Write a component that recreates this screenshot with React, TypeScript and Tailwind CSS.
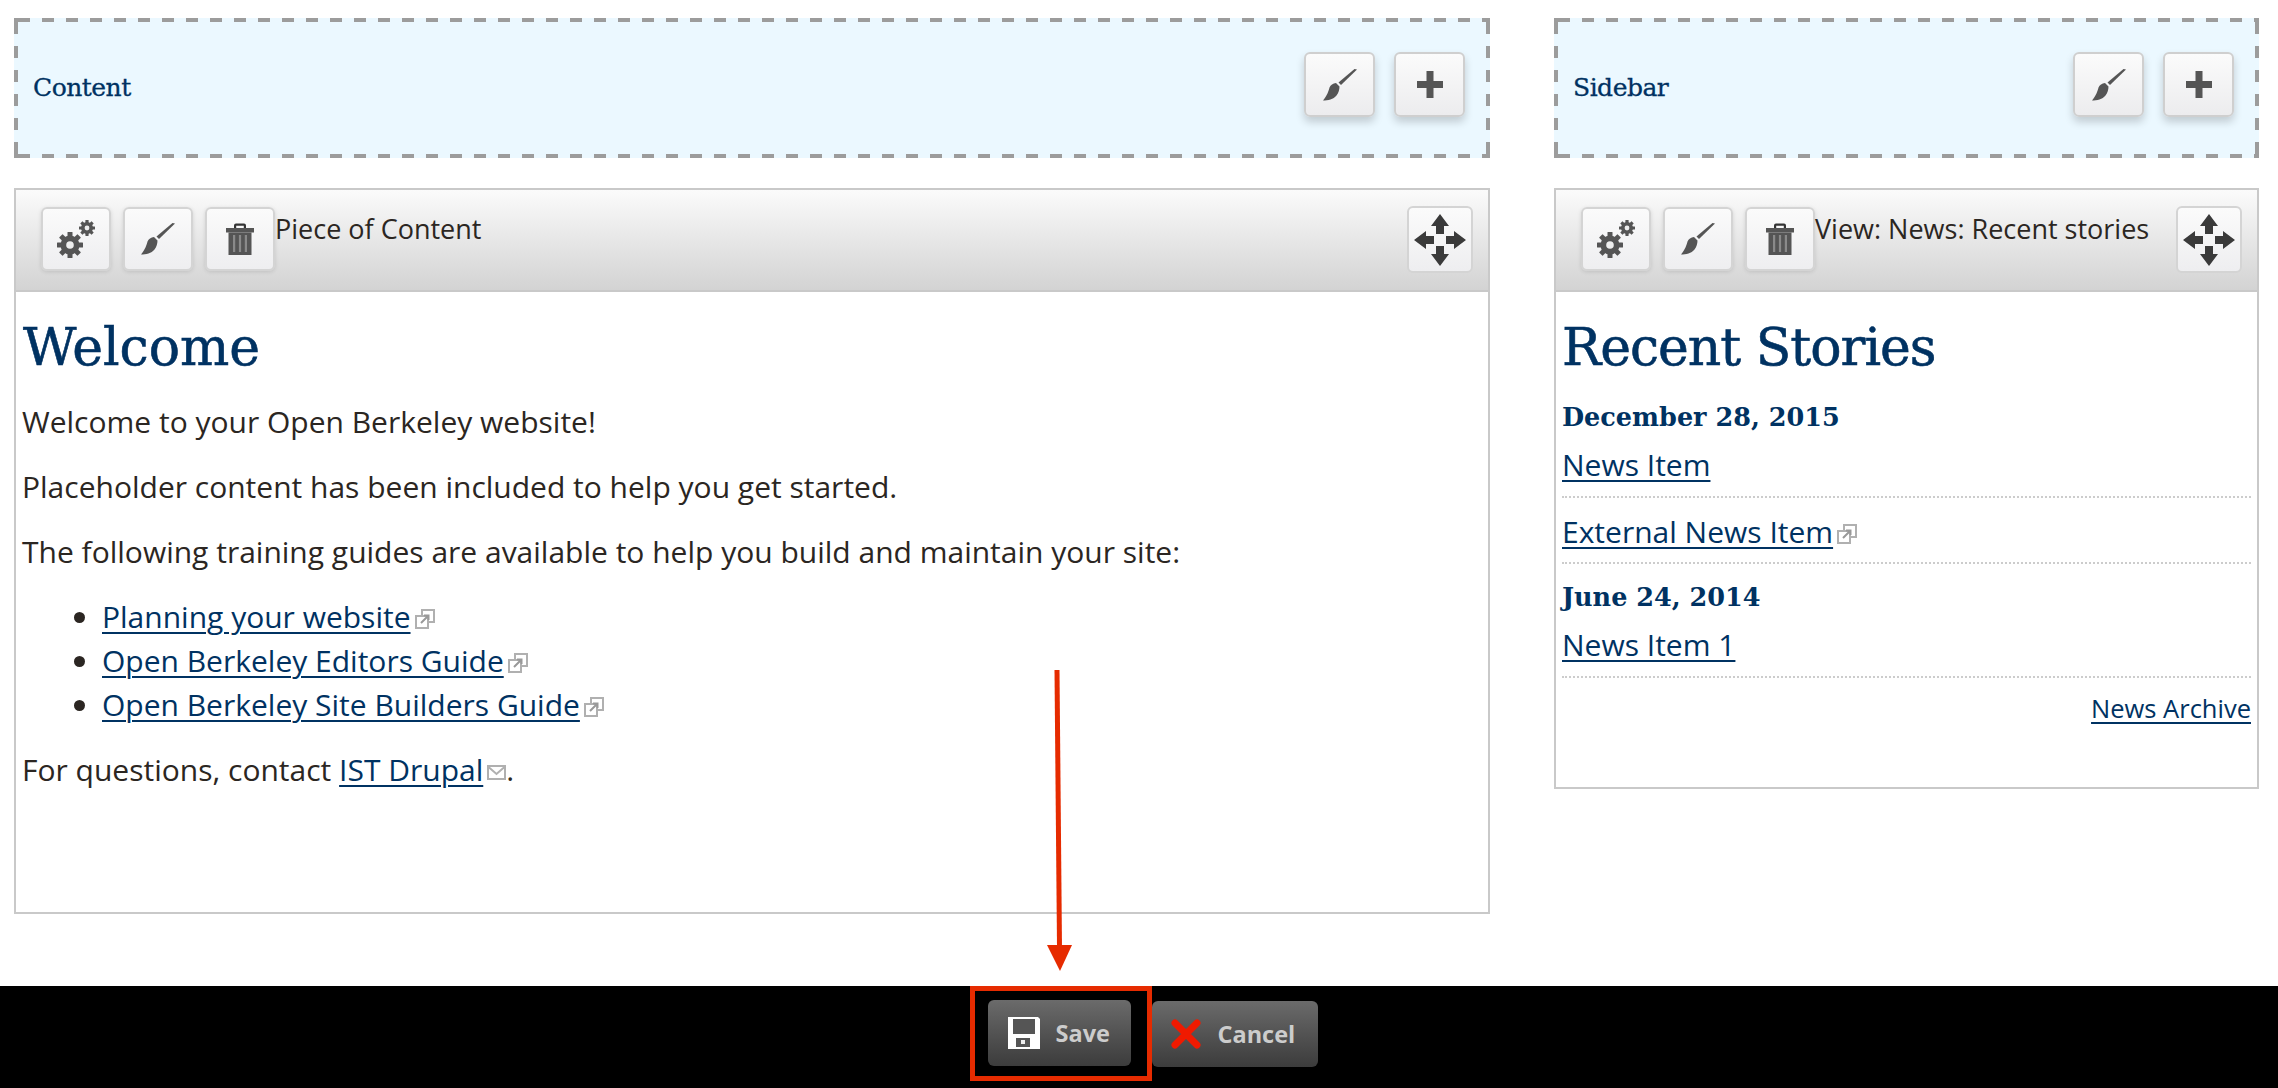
import React from 'react'

const sans = "font-['Open_Sans',sans-serif]"
const slab = "font-['DejaVu_Serif',serif]"
const link = 'text-[#003262] underline decoration-[2px] underline-offset-[4px]'

function GearsIcon() {
    const teeth = [0, 45, 90, 135]
    return (
        <svg width="38" height="38" viewBox="0 0 38 38" fill="#555">
            <g transform="translate(13 25)">
                {teeth.map((a) => (
                    <rect key={a} x="-2.5" y="-13" width="5" height="26" rx="0.5" transform={`rotate(${a})`} />
                ))}
                <circle r="9.5" />
                <circle r="3.8" fill="#eee" />
            </g>
            <g transform="translate(30 8)">
                {teeth.map((a) => (
                    <rect key={a} x="-1.6" y="-8" width="3.2" height="16" rx="0.4" transform={`rotate(${a})`} />
                ))}
                <circle r="6" />
                <circle r="2.4" fill="#eee" />
            </g>
        </svg>
    )
}

function BrushIcon() {
    return (
        <svg width="34" height="32" viewBox="0 0 34 32" fill="#555">
            <path d="M34 0.5 L18 16 L15.5 13.5 L31.5 0 Z" />
            <path d="M16.5 17.5 L13 14 C10 14.5 7.5 16 6.5 18.5 C5.5 22 4 27 0 31.5 C5 31.5 10.5 30.5 13.5 26.5 C15.5 24 16.5 20.5 16.5 17.5 Z" />
        </svg>
    )
}

function TrashIcon() {
    return (
        <svg width="28" height="32" viewBox="0 0 28 32" fill="#555">
            <path d="M8 5 V2.5 Q8 0.5 10 0.5 H18 Q20 0.5 20 2.5 V5 H17.8 V2.8 H10.2 V5 Z" fill="#333" />
            <rect x="0" y="5" width="28" height="4.5" />
            <path d="M2.5 9.5 H25.5 V32 H2.5 Z" />
            <path d="M7 12 H9.2 V29 H7 Z M12.9 12 H15.1 V29 H12.9 Z M18.8 12 H21 V29 H18.8 Z" fill="#8a8a8a" />
        </svg>
    )
}

function PlusIcon() {
    return (
        <svg width="26" height="27" viewBox="0 0 26 27" fill="#555">
            <path d="M9.5 0 H16.5 V10 H26 V17 H16.5 V27 H9.5 V17 H0 V10 H9.5 Z" />
        </svg>
    )
}

function MoveIcon() {
    return (
        <svg width="52" height="52" viewBox="0 0 52 52" fill="#3a3a3a">
            <path d="M26 0 L35 12 H30 V20 H22 V12 H17 Z" />
            <path d="M26 52 L35 40 H30 V32 H22 V40 H17 Z" />
            <path d="M0 26 L12 17 V22 H20 V30 H12 V35 Z" />
            <path d="M52 26 L40 17 V22 H32 V30 H40 V35 Z" />
        </svg>
    )
}

function ExternalIcon() {
    return (
        <svg className="inline-block ml-[4px] align-[-1px]" width="20" height="20" viewBox="0 0 20 20" fill="none" stroke="#b0b0b0" strokeWidth="2">
            <rect x="7" y="1" width="12" height="12" />
            <rect x="1" y="7" width="12" height="12" fill="#fff" />
            <path d="M6 14 L13 7 M9 6.5 H13.5 V11" stroke="#999" />
        </svg>
    )
}

function MailIcon() {
    return (
        <svg className="inline-block ml-[4px] align-[1px]" width="19" height="15" viewBox="0 0 19 15" fill="none" stroke="#b0b0b0" strokeWidth="2">
            <rect x="1" y="1" width="17" height="13" />
            <path d="M1.5 2 L9.5 9 L17.5 2" />
        </svg>
    )
}

function RegionButton({ children }: { children: React.ReactNode }) {
    return (
        <div className="w-[71px] h-[65px] flex items-center justify-center rounded-[6px] border-2 border-[#cfcfcf] bg-gradient-to-b from-[#fbfbfb] to-[#ececee] shadow-[0_5px_8px_rgba(0,0,0,0.18)]">
            {children}
        </div>
    )
}

function BarButton({ children }: { children: React.ReactNode }) {
    return (
        <div className="w-[70px] h-[64px] shrink-0 flex items-center justify-center rounded-[6px] border-2 border-[#d4d4d4] bg-gradient-to-b from-[#fbfbfb] to-[#eeeef0] shadow-[0_1px_4px_rgba(0,0,0,0.12)]">
            {children}
        </div>
    )
}

function Region({ title }: { title: string }) {
    return (
        <div className="h-[140px] pl-[19px] pr-[25px] flex items-center justify-between [background:linear-gradient(#9c9c9c,#9c9c9c)_left_top/4px_4px_no-repeat,linear-gradient(#9c9c9c,#9c9c9c)_right_top/4px_4px_no-repeat,linear-gradient(#9c9c9c,#9c9c9c)_left_bottom/4px_4px_no-repeat,linear-gradient(#9c9c9c,#9c9c9c)_right_bottom/4px_4px_no-repeat,repeating-linear-gradient(90deg,transparent_0_4px,#9c9c9c_4px_16px,transparent_16px_24px)_top/100%_4px_no-repeat,repeating-linear-gradient(90deg,transparent_0_4px,#9c9c9c_4px_16px,transparent_16px_24px)_bottom/100%_4px_no-repeat,repeating-linear-gradient(180deg,transparent_0_4px,#9c9c9c_4px_16px,transparent_16px_24px)_left/4px_100%_no-repeat,repeating-linear-gradient(180deg,transparent_0_4px,#9c9c9c_4px_16px,transparent_16px_24px)_right/4px_100%_no-repeat,#ebf8ff]">
            <span className={`${slab} text-[25px] text-[#003262] tracking-[-0.5px] [-webkit-text-stroke:0.3px_#003262]`}>{title}</span>
            <div className="flex gap-[19px] -mt-[7px]">
                <RegionButton><BrushIcon /></RegionButton>
                <RegionButton><PlusIcon /></RegionButton>
            </div>
        </div>
    )
}

function PanelBar({ title }: { title: string }) {
    return (
        <div className="h-[102px] px-[25px] pt-[17px] flex items-start bg-gradient-to-b from-[#fbfbfb] to-[#d3d3d3] border-b-2 border-[#c9c9c9]">
            <div className="flex gap-[12px]">
                <BarButton><GearsIcon /></BarButton>
                <BarButton><BrushIcon /></BarButton>
                <BarButton><TrashIcon /></BarButton>
            </div>
            <span className="text-[27px] leading-[38px] mt-[3px] text-[#2b2622] whitespace-nowrap">{title}</span>
            <div className="ml-auto -mt-[1px] -mr-[10px] w-[66px] h-[67px] flex items-center justify-center rounded-[6px] border-2 border-[#d4d4d4] bg-gradient-to-b from-[#fbfbfb] to-[#eeeef0]">
                <MoveIcon />
            </div>
        </div>
    )
}

export default function App() {
    return (
        <div className={`${sans} relative w-[2278px] h-[1088px] bg-white flex flex-col overflow-hidden text-[30px] leading-[44px] text-[#2b2622]`}>
            <main className="flex-1 pl-[14px] pt-[18px] flex items-start gap-[64px]">
                {/* Content column */}
                <div className="w-[1476px] flex flex-col gap-[30px]">
                    <Region title="Content" />
                    <section className="h-[726px] border-2 border-[#c9c9c9]">
                        <PanelBar title="Piece of Content" />
                        <div className="px-[6px]">
                            <h1 className={`${slab} text-[52px] leading-[64px] text-[#003262] pt-[23px] pl-[1px] mb-[21px] [-webkit-text-stroke:0.6px_#003262]`}>Welcome</h1>
                            <p className="mb-[21px]">Welcome to your Open Berkeley website!</p>
                            <p className="mb-[21px]">Placeholder content has been included to help you get started.</p>
                            <p className="mb-[21px]">The following training guides are available to help you build and maintain your site:</p>
                            <ul className="list-disc pl-[80px] mb-[21px]">
                                <li><a className={link}>Planning your website</a><ExternalIcon /></li>
                                <li><a className={link}>Open Berkeley Editors Guide</a><ExternalIcon /></li>
                                <li><a className={link}>Open Berkeley Site Builders Guide</a><ExternalIcon /></li>
                            </ul>
                            <p>For questions, contact <a className={link}>IST Drupal</a><MailIcon />.</p>
                        </div>
                    </section>
                </div>

                {/* Sidebar column */}
                <div className="w-[705px] flex flex-col gap-[30px]">
                    <Region title="Sidebar" />
                    <section className="h-[601px] border-2 border-[#c9c9c9]">
                        <PanelBar title="View: News: Recent stories" />
                        <div className="px-[6px]">
                            <h2 className={`${slab} text-[52px] leading-[64px] tracking-[-1px] text-[#003262] pt-[23px] mb-[18px] whitespace-nowrap [-webkit-text-stroke:0.6px_#003262]`}>Recent Stories</h2>
                            <h3 className={`${slab} font-bold text-[25.5px] leading-[40px] text-[#003262] mb-[6px]`}>December 28, 2015</h3>
                            <div className="pb-[9px] border-b-2 border-dotted border-[#cccccc]"><a className={link}>News Item</a></div>
                            <div className="pt-[12px] pb-[8px] border-b-2 border-dotted border-[#cccccc]"><a className={link}>External News Item</a><ExternalIcon /></div>
                            <h3 className={`${slab} font-bold text-[25.5px] leading-[40px] text-[#003262] mt-[13px] mb-[6px]`}>June 24, 2014</h3>
                            <div className="pb-[9px] border-b-2 border-dotted border-[#cccccc]"><a className={link}>News Item 1</a></div>
                            <div className="mt-[11px] text-right text-[25.5px] leading-[38px]"><a className={link}>News Archive</a></div>
                        </div>
                    </section>
                </div>
            </main>

            {/* Save bar */}
            <footer className="h-[102px] bg-black flex items-start justify-center pl-[9px]">
                <div className="w-[182px] h-[95px] border-[5px] border-[#e62b00] flex items-center pl-[13px]">
                    <button className="w-[143px] h-[66px] -mt-[2px] flex items-center gap-[16px] pl-[20px] rounded-[6px] bg-gradient-to-b from-[#6b6b6b] to-[#3c3c3c] text-[#cccccc] font-bold text-[23.5px]">
                        <svg width="32" height="32" viewBox="0 0 32 32">
                            <path d="M0 0 H30 L32 2 V32 H0 Z" fill="#fff" />
                            <rect x="5" y="2" width="22" height="15" fill="#555" />
                            <rect x="8" y="21" width="14" height="9" fill="#555" />
                            <rect x="13" y="23" width="4" height="4" fill="#eee" />
                        </svg>
                        Save
                    </button>
                </div>
                <button className="w-[166px] h-[66px] mt-[15px] flex items-center gap-[17px] pl-[19px] rounded-[6px] bg-gradient-to-b from-[#6b6b6b] to-[#3c3c3c] text-[#cccccc] font-bold text-[23.5px]">
                    <svg width="30" height="30" viewBox="0 0 30 30">
                        <path d="M4 4 L26 26 M26 4 L4 26" stroke="#f01a00" strokeWidth="7" strokeLinecap="round" />
                    </svg>
                    Cancel
                </button>
            </footer>

            {/* Annotation arrow */}
            <svg className="absolute left-[1040px] top-[665px]" width="40" height="310" viewBox="0 0 40 310">
                <path d="M17 5 L19.5 282" stroke="#e62b00" strokeWidth="5" fill="none" />
                <path d="M7 280 H32 L20 306 Z" fill="#e62b00" />
            </svg>
        </div>
    )
}
